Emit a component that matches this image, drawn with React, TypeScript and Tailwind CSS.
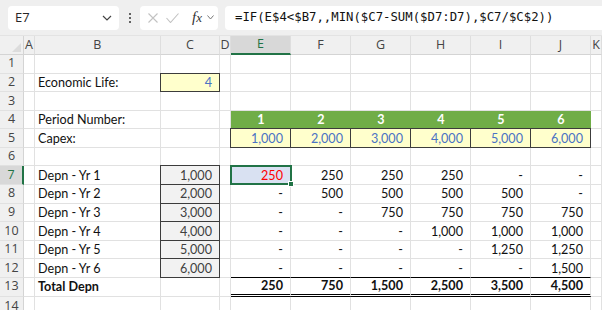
import React from "react";

const COLS = ["A", "B", "C", "D", "E", "F", "G", "H", "I", "J", "K"];

const LABELS: Record<number, string> = {
  2: "Economic Life:",
  4: "Period Number:",
  5: "Capex:",
  7: "Depn - Yr 1",
  8: "Depn - Yr 2",
  9: "Depn - Yr 3",
  10: "Depn - Yr 4",
  11: "Depn - Yr 5",
  12: "Depn - Yr 6",
  13: "Total Depn",
};

// values for columns E..J
const VALUES: Record<number, string[]> = {
  4: ["1", "2", "3", "4", "5", "6"],
  5: ["1,000", "2,000", "3,000", "4,000", "5,000", "6,000"],
  7: ["250", "250", "250", "250", "-", "-"],
  8: ["-", "500", "500", "500", "500", "-"],
  9: ["-", "-", "750", "750", "750", "750"],
  10: ["-", "-", "-", "1,000", "1,000", "1,000"],
  11: ["-", "-", "-", "-", "1,250", "1,250"],
  12: ["-", "-", "-", "-", "-", "1,500"],
  13: ["250", "750", "1,500", "2,500", "3,500", "4,500"],
};

const CAPEX_C: Record<number, string> = {
  7: "1,000",
  8: "2,000",
  9: "3,000",
  10: "4,000",
  11: "5,000",
  12: "6,000",
};

const grid = "border-r border-b border-[#e1e1e1]";
const boxed = "-mt-px -ml-px border border-[#3c3c3c]";

function Cell({ r, c }: { r: number; c: number }) {
  const col = COLS[c];

  if (col === "B" && LABELS[r]) {
    return (
      <div className={`${grid} flex items-center pl-[3px] pt-[2px] ${r === 13 ? "font-bold" : ""}`}>
        {LABELS[r]}
      </div>
    );
  }

  if (col === "C" && r === 2) {
    return (
      <div className={`${boxed} bg-[#ffffcc] flex items-center justify-end pr-[7px] pt-[2px] text-[#4a72c4]`}>4</div>
    );
  }

  if (col === "C" && CAPEX_C[r]) {
    return (
      <div className={`${boxed} bg-[#f2f2f2] flex items-center justify-end pr-[7px] pt-[2px] text-[#3f3f3f]`}>
        {CAPEX_C[r]}
      </div>
    );
  }

  const vi = c - 4;
  if (vi >= 0 && vi < 6 && VALUES[r]) {
    const v = VALUES[r][vi];
    if (r === 4) {
      return (
        <div className="bg-[#70ad47] border-b border-[#70ad47] flex items-center justify-center pt-[2px] font-bold text-white">
          {v}
        </div>
      );
    }
    if (r === 5) {
      return (
        <div className={`${boxed} bg-[#ffffcc] flex items-center justify-end pr-[7px] pt-[2px] text-[#4a72c4]`}>{v}</div>
      );
    }
    if (r === 7 && vi === 0) {
      return (
        <div className={`${grid} relative bg-[#d9e1f2] flex items-center justify-end pr-[7px] pt-[2px] text-[#ff0000]`}>
          {v}
          <div className="absolute -left-px -top-px -right-[2px] -bottom-px border-2 border-[#217346]" />
          <div className="absolute -right-[4px] -bottom-[3px] h-[6px] w-[6px] bg-[#217346] border border-white" />
        </div>
      );
    }
    const under =
      r === 12
        ? "border-r border-r-[#e1e1e1] border-b border-b-black"
        : r === 13
          ? "border-r border-r-[#e1e1e1] border-b-[3px] border-double border-b-black"
          : grid;
    return (
      <div className={`${under} flex items-center justify-end pr-[7px] pt-[2px] ${r === 13 ? "font-bold" : ""}`}>
        {v}
      </div>
    );
  }

  return <div className={grid} />;
}

export default function App() {
  const rows = Array.from({ length: 14 }, (_, i) => i + 1);

  return (
    <div className="h-[310px] w-[602px] overflow-hidden bg-white">
      {/* formula bar */}
      <div className="flex h-[36px] items-center bg-[#efefef] border-b border-[#e3e3e3] pl-[8px] font-['Open_Sans',sans-serif]">
        <div className="flex h-[24px] w-[111px] items-center justify-between rounded-[4px] bg-white pl-[7px] pr-[7px] text-[13px] text-[#262626]">
          <span>E7</span>
          <svg width="10" height="6" viewBox="0 0 10 6" fill="none" stroke="#444" strokeWidth="1.2">
            <path d="M1 1l4 4 4-4" />
          </svg>
        </div>
        <div className="flex w-[21px] flex-col items-center gap-[2px]">
          <span className="h-[2px] w-[2px] rounded-full bg-[#333]" />
          <span className="h-[2px] w-[2px] rounded-full bg-[#333]" />
          <span className="h-[2px] w-[2px] rounded-full bg-[#333]" />
        </div>
        <div className="flex h-[24px] w-[78px] items-center rounded-[4px] bg-white pl-[8px]">
          <svg width="10" height="10" viewBox="0 0 10 10" stroke="#c2c2c2" strokeWidth="1.1">
            <path d="M0.5 0.5l9 9M9.5 0.5l-9 9" />
          </svg>
          <svg className="ml-[8px]" width="13" height="10" viewBox="0 0 13 10" fill="none" stroke="#c2c2c2" strokeWidth="1.1">
            <path d="M0.5 5l4 4.5 8-9" />
          </svg>
          <span className="ml-[13px] font-['Liberation_Serif',serif] text-[15px] italic leading-none text-[#333]">
            f<span className="text-[13px]">x</span>
          </span>
          <svg className="ml-[5px]" width="7" height="5" viewBox="0 0 7 5" fill="none" stroke="#777" strokeWidth="1">
            <path d="M0.5 0.5l3 3.5 3-3.5" />
          </svg>
        </div>
        <div className="ml-[7px] flex h-[24px] flex-1 items-center rounded-l-[4px] bg-white pl-[10px] font-['DejaVu_Sans_Mono',monospace] text-[12.3px] text-[#111]">
          =IF(E$4&lt;$B7,,MIN($C7-SUM($D7:D7),$C7/$C$2))
        </div>
      </div>

      {/* sheet */}
      <div className="grid grid-cols-[24px_11px_125.7px_59.3px_11px_60px_60px_60px_60px_60px_60px_1fr] grid-rows-[19px_repeat(13,18.58px)_1fr] h-[274px] font-['Lato',sans-serif] text-[12.6px] text-[#111]">
        <div className="relative bg-[#f0f0f0] border-r border-b border-[#d4d4d4]">
          <div className="absolute right-[2px] bottom-[2px] h-0 w-0 border-l-[9px] border-t-[9px] border-l-transparent border-t-transparent border-b-[0px] border-r-[9px] border-r-[#dcdcdc]" />
        </div>
        {COLS.map((c) => (
          <div
            key={c}
            className={`flex items-center justify-center font-['Open_Sans',sans-serif] text-[12.5px] border-r border-[#dedede] ${
              c === "E"
                ? "bg-[#d8d8d8] text-[#217346] border-b-2 border-b-[#217346]"
                : "bg-[#f0f0f0] text-[#444] border-b border-b-[#d4d4d4]"
            }`}
          >
            {c}
          </div>
        ))}
        {rows.map((r) => (
          <React.Fragment key={r}>
            <div
              className={`flex items-center justify-center font-['Open_Sans',sans-serif] text-[12.5px] border-b border-[#e1e1e1] ${
                r === 7
                  ? "bg-[#d8d8d8] text-[#217346] border-r-2 border-r-[#217346]"
                  : "bg-[#f0f0f0] text-[#444] border-r border-r-[#d4d4d4]"
              }`}
            >
              {r}
            </div>
            {COLS.map((_, c) => (
              <Cell key={c} r={r} c={c} />
            ))}
          </React.Fragment>
        ))}
      </div>
    </div>
  );
}
